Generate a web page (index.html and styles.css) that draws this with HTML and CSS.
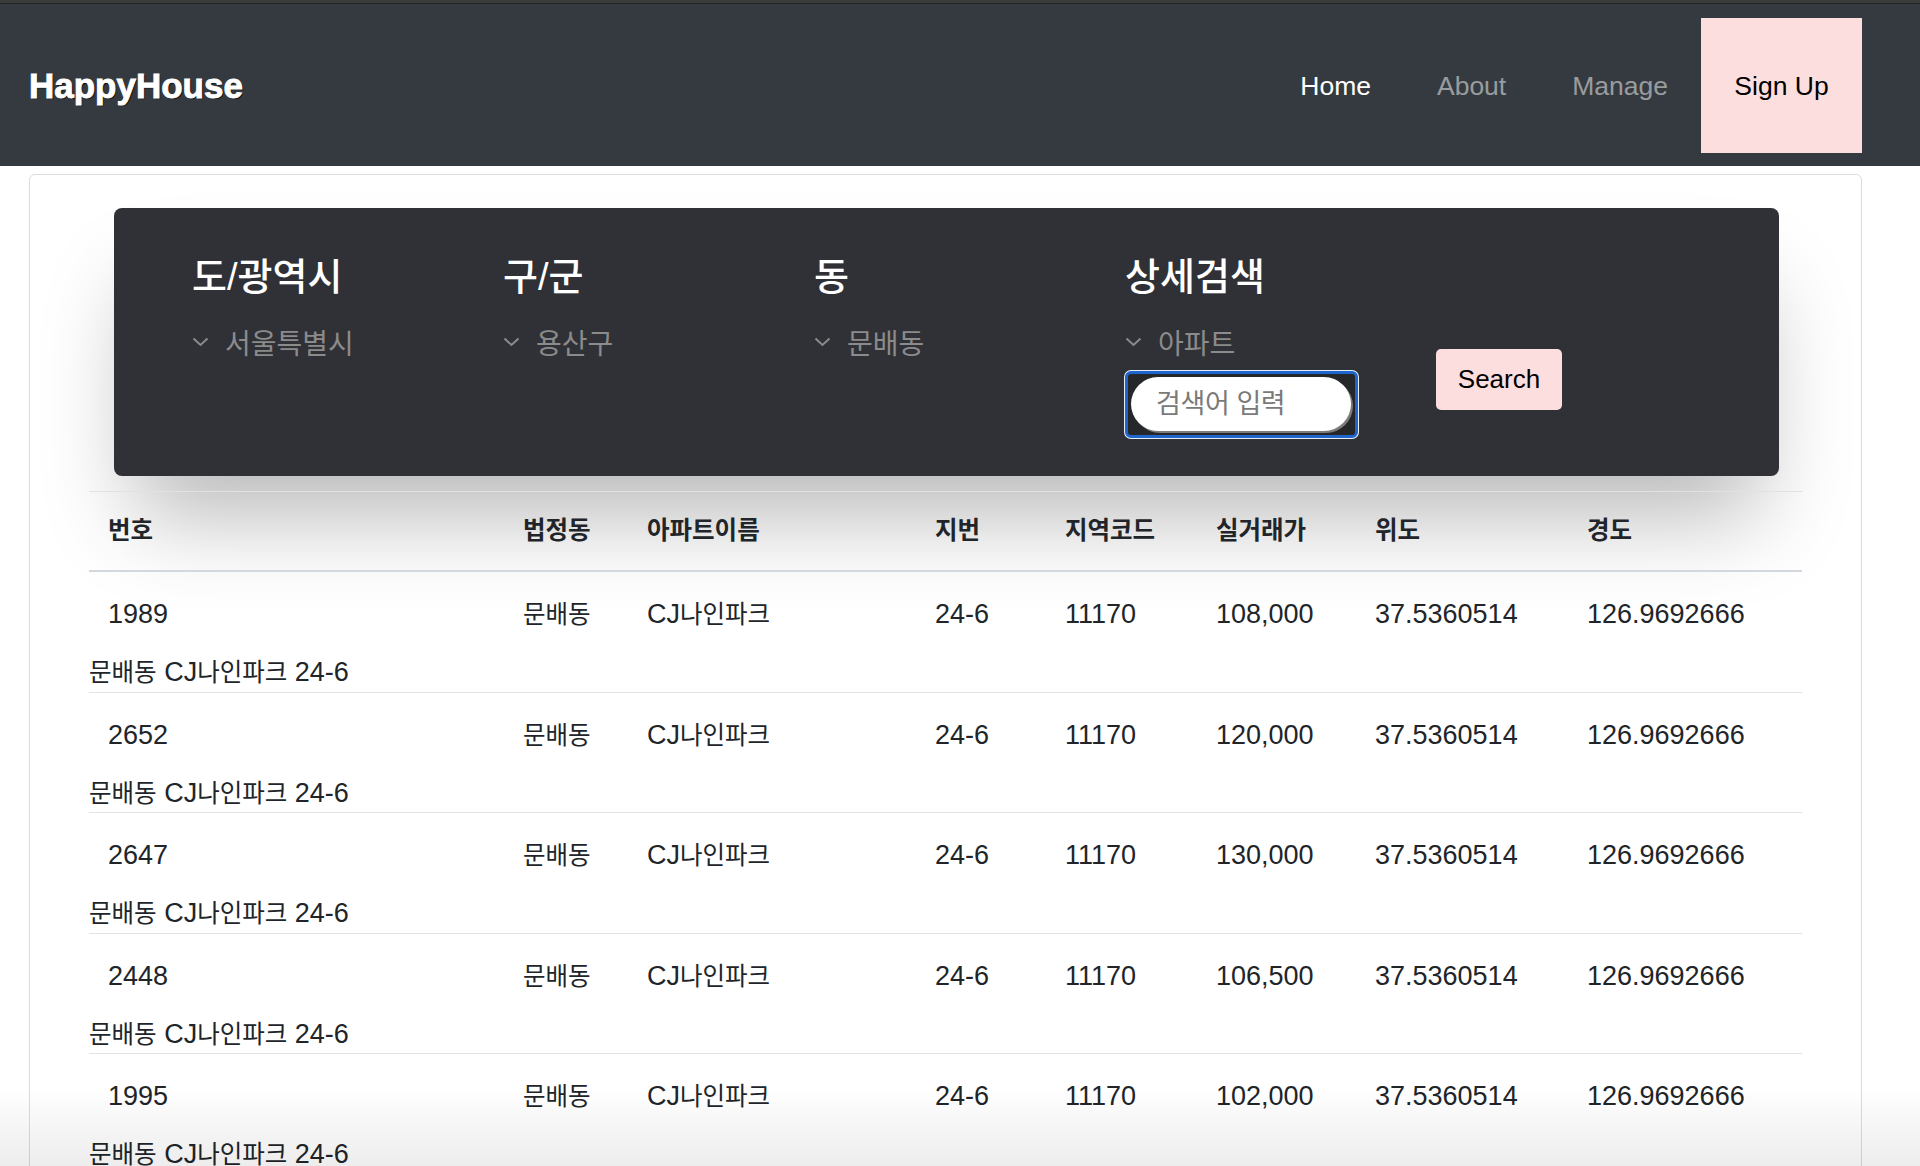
FILE: index.html
```html
<!DOCTYPE html>
<html lang="ko">
<head>
<meta charset="utf-8">
<title>HappyHouse</title>
<link rel="stylesheet" href="styles.css">
</head>
<body>
<div class="topline"></div>
<nav class="navbar">
  <a class="brand" href="#">HappyHouse</a>
  <div class="nav-links">
    <a class="nav-link active" href="#">Home</a>
    <a class="nav-link" href="#">About</a>
    <a class="nav-link" href="#">Manage</a>
    <a class="nav-link signup" href="#">Sign Up</a>
  </div>
</nav>
<main class="card">
  <section class="panel">
    <div class="col">
      <h3 class="col-title">도/광역시</h3>
      <div class="select"><svg class="chev" width="17" height="10" viewBox="0 0 17 10"><polyline points="1.5,1.5 8.5,8 15.5,1.5" fill="none" stroke="#8b8b8b" stroke-width="2"/></svg><span>서울특별시</span></div>
    </div>
    <div class="col">
      <h3 class="col-title">구/군</h3>
      <div class="select"><svg class="chev" width="17" height="10" viewBox="0 0 17 10"><polyline points="1.5,1.5 8.5,8 15.5,1.5" fill="none" stroke="#8b8b8b" stroke-width="2"/></svg><span>용산구</span></div>
    </div>
    <div class="col">
      <h3 class="col-title">동</h3>
      <div class="select"><svg class="chev" width="17" height="10" viewBox="0 0 17 10"><polyline points="1.5,1.5 8.5,8 15.5,1.5" fill="none" stroke="#8b8b8b" stroke-width="2"/></svg><span>문배동</span></div>
    </div>
    <div class="col">
      <h3 class="col-title">상세검색</h3>
      <div class="select"><svg class="chev" width="17" height="10" viewBox="0 0 17 10"><polyline points="1.5,1.5 8.5,8 15.5,1.5" fill="none" stroke="#8b8b8b" stroke-width="2"/></svg><span>아파트</span></div>
      <div class="search-box"><input class="search-input" type="text" placeholder="검색어 입력"></div>
    </div>
    <div class="col col-btn">
      <button class="search-btn" type="button">Search</button>
    </div>
  </section>

  <table class="deals">
    <colgroup>
      <col class="w1"><col class="w2"><col class="w3"><col class="w4"><col class="w5"><col class="w6"><col class="w7"><col class="w8">
    </colgroup>
    <thead>
      <tr><th>번호</th><th>법정동</th><th>아파트이름</th><th>지번</th><th>지역코드</th><th>실거래가</th><th>위도</th><th>경도</th></tr>
    </thead>
    <tbody>
      <tr class="main"><td>1989</td><td><span class="ko">문배동</span></td><td>CJ<span class="ko">나인파크</span></td><td>24-6</td><td>11170</td><td>108,000</td><td>37.5360514</td><td>126.9692666</td></tr>
      <tr class="sub"><td colspan="8"><span class="ko">문배동</span> CJ<span class="ko">나인파크</span> 24-6</td></tr>
      <tr class="main"><td>2652</td><td><span class="ko">문배동</span></td><td>CJ<span class="ko">나인파크</span></td><td>24-6</td><td>11170</td><td>120,000</td><td>37.5360514</td><td>126.9692666</td></tr>
      <tr class="sub"><td colspan="8"><span class="ko">문배동</span> CJ<span class="ko">나인파크</span> 24-6</td></tr>
      <tr class="main"><td>2647</td><td><span class="ko">문배동</span></td><td>CJ<span class="ko">나인파크</span></td><td>24-6</td><td>11170</td><td>130,000</td><td>37.5360514</td><td>126.9692666</td></tr>
      <tr class="sub"><td colspan="8"><span class="ko">문배동</span> CJ<span class="ko">나인파크</span> 24-6</td></tr>
      <tr class="main"><td>2448</td><td><span class="ko">문배동</span></td><td>CJ<span class="ko">나인파크</span></td><td>24-6</td><td>11170</td><td>106,500</td><td>37.5360514</td><td>126.9692666</td></tr>
      <tr class="sub"><td colspan="8"><span class="ko">문배동</span> CJ<span class="ko">나인파크</span> 24-6</td></tr>
      <tr class="main"><td>1995</td><td><span class="ko">문배동</span></td><td>CJ<span class="ko">나인파크</span></td><td>24-6</td><td>11170</td><td>102,000</td><td>37.5360514</td><td>126.9692666</td></tr>
      <tr class="sub"><td colspan="8"><span class="ko">문배동</span> CJ<span class="ko">나인파크</span> 24-6</td></tr>
    </tbody>
  </table>
</main>
<div class="bottom-fade"></div>
</body>
</html>
```
FILE: styles.css
```css
* { box-sizing: border-box; }

html, body {
  margin: 0;
  padding: 0;
  background: #ffffff;
  font-family: "Liberation Sans", "Noto Sans CJK KR", sans-serif;
  color: #212529;
  overflow: hidden;
  height: 1166px;
}

.topline {
  height: 4px;
  background: #3b3b3b;
  border-bottom: 1px solid #232323;
}

.navbar {
  height: 162px;
  background: #343a40;
  display: flex;
  align-items: center;
  justify-content: space-between;
  padding: 14px 58px 13px 29px;
}

.brand {
  color: #ffffff;
  text-decoration: none;
  font-size: 35px;
  font-weight: 700;
  letter-spacing: 0;
  -webkit-text-stroke: 0.9px #ffffff;
  text-shadow: 1px 1px 1px #000;
}

.nav-links {
  display: flex;
  align-items: stretch;
  height: 135px;
}

.nav-link {
  display: flex;
  align-items: center;
  padding: 2px 33px 0;
  font-size: 26.5px;
  color: rgba(255, 255, 255, 0.5);
  text-decoration: none;
}

.nav-link.active { color: #ffffff; }

.nav-link.signup {
  background: #fcdede;
  color: #000000;
  width: 161px;
  justify-content: center;
  padding: 2px 0 0;
}

.card {
  margin: 8px 58px 0 29px;
  border: 1px solid #dcdcdc;
  border-radius: 6px;
  padding: 33px 58px 0 59px;
  min-height: 1000px;
  background: #fff;
}

.panel {
  margin: 0 24px 0 25px;
  background: #303136;
  border-radius: 8px;
  box-shadow: 0 60px 90px -20px rgba(0, 0, 0, 0.28);
  display: grid;
  grid-template-columns: repeat(4, 311px) auto;
  padding: 47px 0 38px 78px;
}

.col { display: flex; flex-direction: column; align-items: flex-start; }

.col-title {
  margin: 0;
  font-size: 38px;
  line-height: 44px;
  font-weight: 500;
  color: #ffffff;
}

.select {
  margin-top: 23px;
  height: 40px;
  display: flex;
  align-items: center;
  gap: 16px;
  color: #8b8b8b;
  font-size: 28px;
}

.chev { display: block; }

.search-box {
  margin-top: 9px;
  width: 233px;
  height: 67px;
  border: 3px solid #1f66cc;
  border-radius: 6px;
  background: #26272b;
  box-shadow: 0 0 0 1px #e8eef8;
  padding: 3px 4px 4px 3px;
}

.search-input {
  width: 100%;
  height: 100%;
  border: none;
  outline: none;
  border-radius: 30px;
  background: #ffffff;
  box-shadow: 2px 2px 0 #7c7c7c;
  padding: 0 0 0 25px;
  font-family: "Liberation Sans", "Noto Sans CJK KR", sans-serif;
  font-size: 27px;
  letter-spacing: -0.4px;
  color: #333;
}

.search-input::placeholder { color: #7a7a7a; }

.col-btn { padding-top: 94px; }

.search-btn {
  width: 126px;
  height: 61px;
  border: none;
  border-radius: 5px;
  background: #fcdede;
  color: #000;
  font-family: "Liberation Sans", sans-serif;
  font-size: 26px;
  padding: 0;
}

.deals {
  margin-top: 15px;
  width: 1713px;
  border-collapse: collapse;
  table-layout: fixed;
  font-size: 27px;
  color: #212529;
}

.w1 { width: 415px; }
.w2 { width: 124px; }
.w3 { width: 288px; }
.w4 { width: 130px; }
.w5 { width: 151px; }
.w6 { width: 159px; }
.w7 { width: 212px; }
.w8 { width: 234px; }

.deals th {
  text-align: left;
  font-weight: 700;
  font-size: 24.5px;
  line-height: 40px;
  padding: 19px 19px 19px;
  border-top: 1px solid #dee2e6;
  border-bottom: 2px solid #d3d7de;
  white-space: nowrap;
}

.deals td {
  vertical-align: top;
  white-space: nowrap;
}

.main td {
  padding: 22px 19px 0;
  line-height: 40px;
  height: 62px;
}

.sub td {
  padding: 19px 0 0;
  line-height: 38px;
  height: 58px;
  border-bottom: 1px solid #e1e3e6;
}

.ko {
  font-size: 24.5px;
  line-height: 24px;
}

.bottom-fade {
  position: fixed;
  left: 0;
  right: 0;
  bottom: 0;
  height: 80px;
  background: linear-gradient(to bottom, rgba(0, 0, 0, 0), rgba(0, 0, 0, 0.07));
  pointer-events: none;
}
```
